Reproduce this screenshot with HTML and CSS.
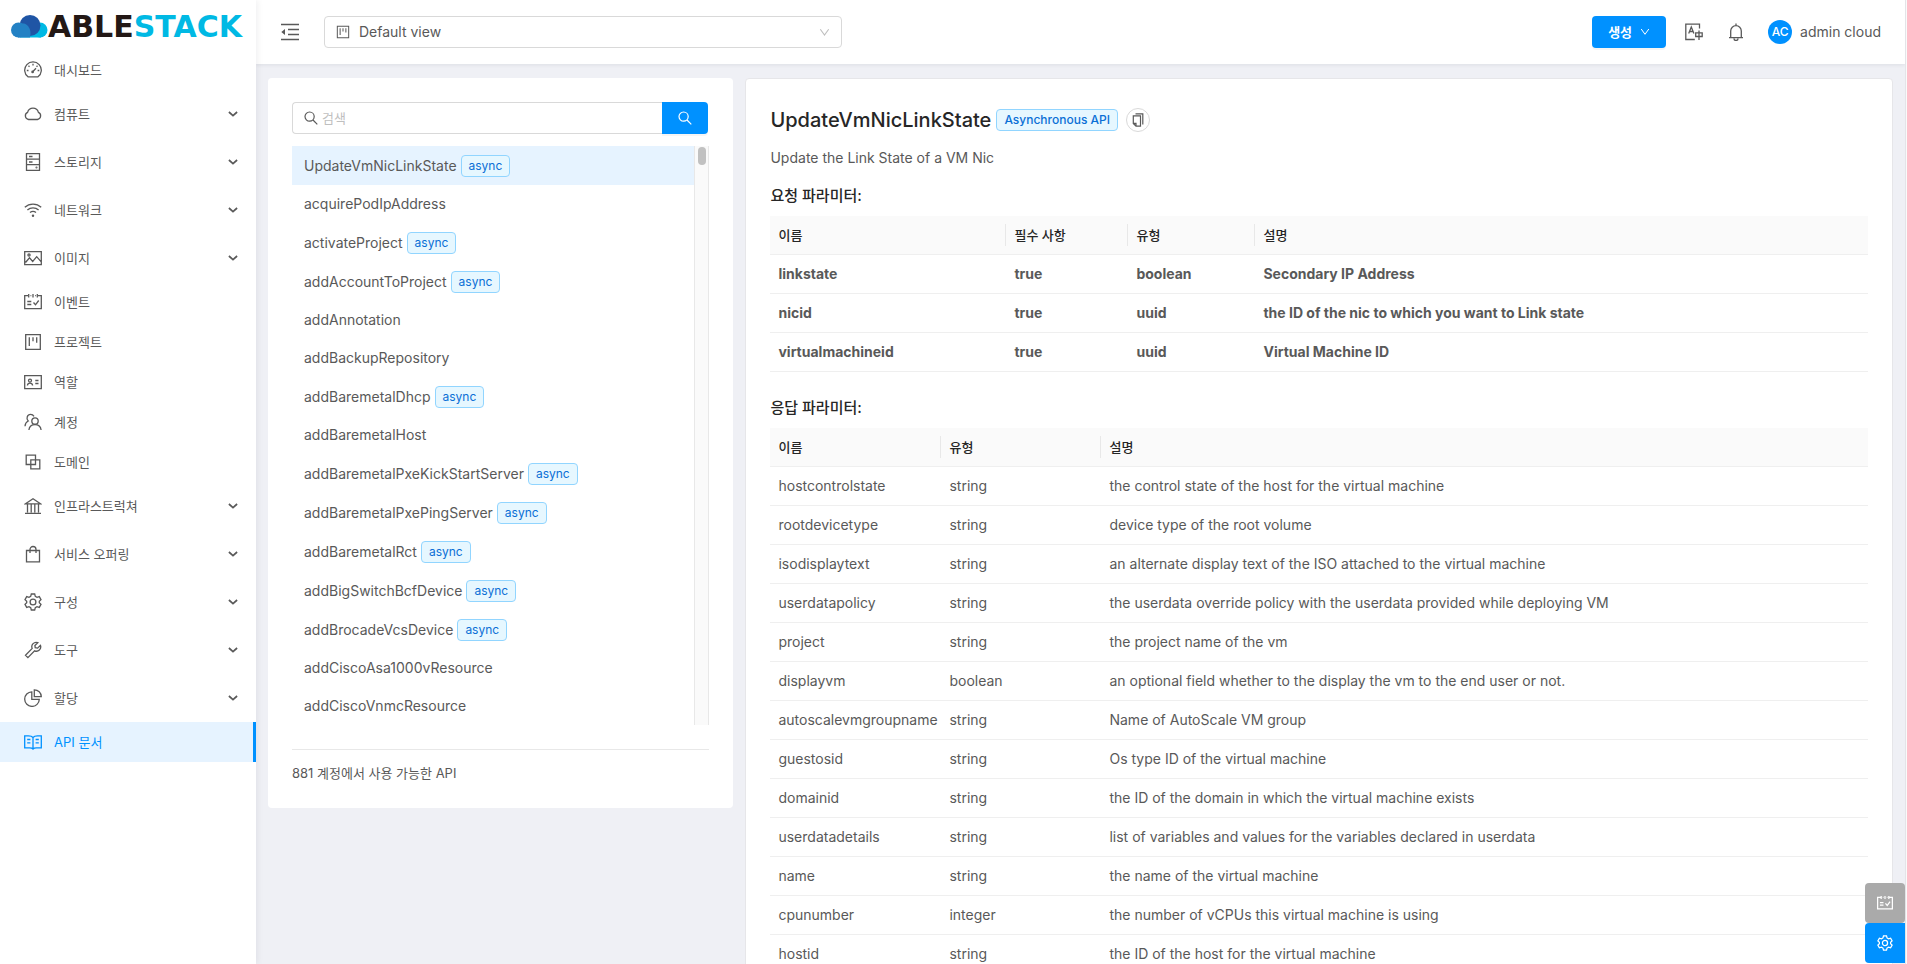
FILE: index.html
```html
<!DOCTYPE html>
<html lang="ko">
<head>
<meta charset="utf-8">
<title>ABLESTACK - API 문서</title>
<link rel="stylesheet" href="styles.css">
</head>
<body>
<svg class="sprite" aria-hidden="true">
  <symbol id="i-dash" viewBox="0 0 18 18"><path d="M4 15.800h10A8.300 8.300 0 1 0 4 15.800z"/><path d="M8.500 11l3.500-3.800M9 2.800v1.700M4.500 4.700l1 1M13.500 4.700l-1 1M2.800 9.500h1.700M13.600 9.500h1.700"/><circle cx="8.600" cy="10.900" r=".7"/></symbol>
  <symbol id="i-cloud" viewBox="0 0 18 18"><path d="M4.500 14.500A3.800 3.800 0 0 1 3.600 7.300 5.600 5.600 0 0 1 14.400 7.300 3.800 3.800 0 0 1 13.500 14.500z"/></symbol>
  <symbol id="i-disk" viewBox="0 0 18 18"><path d="M2.500.7h13v16.600h-13zM2.500 6.200h13M2.500 11.700h13M5 3.500h3.500M5 9h3.500"/><circle cx="12.500" cy="14.500" r=".4"/></symbol>
  <symbol id="i-wifi" viewBox="0 0 18 18"><path d="M.8 6.300a12 12 0 0 1 16.400 0M3.400 9a8.400 8.400 0 0 1 11.200 0M6 11.600a4.600 4.600 0 0 1 6 0"/><circle class="dot" cx="9" cy="14.700" r="1.200"/></symbol>
  <symbol id="i-image" viewBox="0 0 18 18"><path d="M.7 2.700h16.600v12.900H.7zM1.500 13.500l4-4.700 3.200 3.700 4-4.800 4.300 5"/><circle cx="5" cy="6" r="1.100"/></symbol>
  <symbol id="i-event" viewBox="0 0 18 18"><path d="M4 2.700H.7v12.900h16.600V2.700H14M4.700 1v3.500M9 1v3.500M13.300 1v3.500M6.500 2.700h.8M11 2.700h.8M3.300 8.500h4M3.300 11.500h4M9.500 9.500l2 2.300 3.200-4.300"/></symbol>
  <symbol id="i-project" viewBox="0 0 18 18"><path d="M1.700 1.700h14.600v14.600H1.700zM5.300 4.300v8.700M9 4.300v4M12.700 4.300v5.400"/></symbol>
  <symbol id="i-idcard" viewBox="0 0 18 18"><path d="M.7 2.700h16.600v12.900H.7zM3.400 12.500c.2-3.300 5-3.300 5.200 0M11.300 7.500h3.200M11.300 10.500h3.200"/><circle cx="6" cy="7.600" r="1.500"/></symbol>
  <symbol id="i-team" viewBox="0 0 18 18"><circle cx="11" cy="8" r="3.200"/><path d="M4.900 17c.8-7.200 11.400-7.200 12.200 0M1 13.300c.2-3 1.200-4.400 3.200-5.300C1.800 5.500 3.300 1.300 6.600 1.300c1.600 0 2.700.8 3.400 2"/></symbol>
  <symbol id="i-block" viewBox="0 0 18 18"><path d="M2.200 2.200h9.300v9.300H2.200zM6.800 6.800h9v9h-9z"/></symbol>
  <symbol id="i-bank" viewBox="0 0 18 18"><path d="M1.500 6.800L9 1.700l7.500 5.100zM3.500 7v8.500M7.200 7v8.500M10.800 7v8.500M14.500 7v8.500M1 16.300h16"/></symbol>
  <symbol id="i-bag" viewBox="0 0 18 18"><path d="M2.500 5.500h13v11.300h-13zM6 8V4.500a3 3 0 0 1 6 0V8"/></symbol>
  <symbol id="i-gear" viewBox="0 0 18 18"><path d="M7.300 1h3.400l.6 2.300 1.700 1 2.300-.7 1.700 3-1.700 1.600v1.600l1.700 1.600-1.700 3-2.300-.7-1.700 1-.6 2.300H7.300l-.6-2.300-1.700-1-2.300.7-1.700-3 1.700-1.600V8.200L1 6.600l1.700-3 2.300.7 1.700-1z"/><circle cx="9" cy="9" r="2.900"/></symbol>
  <symbol id="i-tool" viewBox="0 0 18 18"><path d="M13.800 1.700a4.300 4.300 0 0 0-5.600 5.700L1.500 14.200l2.400 2.400 6.700-6.800a4.300 4.300 0 0 0 5.800-5.500l-2.800 2.800-2.400-.4-.3-2.300z"/></symbol>
  <symbol id="i-pie" viewBox="0 0 18 18"><path d="M7.800 2.800a7.300 7.300 0 1 0 7.500 7.500H7.800zM10.300.8v6.900h7A7 7 0 0 0 10.300.8z"/></symbol>
  <symbol id="i-read" viewBox="0 0 18 18"><path d="M9 4.500C8 3.200 6.500 2.800 4.500 2.800H.7v12h5c1.600 0 2.500.3 3.300 1.200.8-.9 1.700-1.200 3.300-1.200h5v-12h-3.800C11.500 2.800 10 3.200 9 4.500zM9 4.500V16M3.200 6.500h3.200M3.200 9.800h3.200M11.600 6.500h3.200M11.600 9.800h3.200"/></symbol>
  <symbol id="i-fold" viewBox="0 0 18 18"><path d="M0 1.500h18M7 6.500h11M7 11.500h11M0 16.500h18"/><path class="dot" d="M.3 9l3.700-3v6z"/></symbol>
  <symbol id="i-search" viewBox="0 0 14 14"><circle cx="5.600" cy="5.600" r="4.600"/><path d="M9 9l4.300 4.300"/></symbol>
  <symbol id="i-down" viewBox="0 0 10 10"><path d="M1.200 2l3.800 5.300L8.800 2"/></symbol>
  <symbol id="i-chev" viewBox="0 0 10 10"><path d="M.9 3L5 6.600 9.100 3"/></symbol>
  <symbol id="i-lang" viewBox="0 0 18 18"><path d="M14.500 5.500V1.200H.8v15.300h9M3.700 10.500L6.300 4l2.600 6.500M4.600 8.500H8M10.700 9.800h6.500v3.700h-6.500zM14 7.500v9.500"/></symbol>
  <symbol id="i-bell" viewBox="0 0 18 18"><path d="M3.700 14.500V8a5.300 5.300 0 0 1 10.600 0v6.500M2 14.700h14M9 .6v2M7 15.500a2 2 0 0 0 4 0"/></symbol>
  <symbol id="i-copy" viewBox="0 0 14 14"><path d="M4.500.8h7.300v10.700M2.300 2.800h7.200v10.400H5L2.300 10.500zM2.500 10.300H5V13"/></symbol>
</svg>

<div class="app">
  <aside class="sidebar">
    <a class="logo" href="#" aria-label="ABLESTACK">
      <svg class="logo-mark" viewBox="0 0 37 23" aria-hidden="true">
        <circle cx="29" cy="15" r="7.500" fill="#00b9e4"/><rect x="9" y="15" width="21" height="7.500" fill="#00b9e4"/>
        <circle cx="19" cy="10.500" r="10.500" fill="#1f55a5"/>
        <circle cx="7.500" cy="15" r="7.500" fill="#2381c4"/><path d="M7 22.500V8.500h6c4 1 8 6 6 14z" fill="#2381c4"/>
      </svg>
      <span class="logo-text">ABLE<span class="logo-accent">STACK</span></span>
    </a>
    <nav class="menu">
      <a href="#" class="item"><svg class="icon"><use href="#i-dash"/></svg><span>대시보드</span></a>
      <a href="#" class="item sub"><svg class="icon"><use href="#i-cloud"/></svg><span>컴퓨트</span><svg class="chev"><use href="#i-chev"/></svg></a>
      <a href="#" class="item sub"><svg class="icon"><use href="#i-disk"/></svg><span>스토리지</span><svg class="chev"><use href="#i-chev"/></svg></a>
      <a href="#" class="item sub"><svg class="icon"><use href="#i-wifi"/></svg><span>네트워크</span><svg class="chev"><use href="#i-chev"/></svg></a>
      <a href="#" class="item sub"><svg class="icon"><use href="#i-image"/></svg><span>이미지</span><svg class="chev"><use href="#i-chev"/></svg></a>
      <a href="#" class="item"><svg class="icon"><use href="#i-event"/></svg><span>이벤트</span></a>
      <a href="#" class="item"><svg class="icon"><use href="#i-project"/></svg><span>프로젝트</span></a>
      <a href="#" class="item"><svg class="icon"><use href="#i-idcard"/></svg><span>역할</span></a>
      <a href="#" class="item"><svg class="icon"><use href="#i-team"/></svg><span>계정</span></a>
      <a href="#" class="item"><svg class="icon"><use href="#i-block"/></svg><span>도메인</span></a>
      <a href="#" class="item sub"><svg class="icon"><use href="#i-bank"/></svg><span>인프라스트럭쳐</span><svg class="chev"><use href="#i-chev"/></svg></a>
      <a href="#" class="item sub"><svg class="icon"><use href="#i-bag"/></svg><span>서비스 오퍼링</span><svg class="chev"><use href="#i-chev"/></svg></a>
      <a href="#" class="item sub"><svg class="icon"><use href="#i-gear"/></svg><span>구성</span><svg class="chev"><use href="#i-chev"/></svg></a>
      <a href="#" class="item sub"><svg class="icon"><use href="#i-tool"/></svg><span>도구</span><svg class="chev"><use href="#i-chev"/></svg></a>
      <a href="#" class="item sub"><svg class="icon"><use href="#i-pie"/></svg><span>할당</span><svg class="chev"><use href="#i-chev"/></svg></a>
      <a href="#" class="item active"><svg class="icon"><use href="#i-read"/></svg><span>API 문서</span></a>
    </nav>
  </aside>

  <div class="main">
    <header class="topbar">
      <button class="plain" aria-label="메뉴 접기"><svg class="icon"><use href="#i-fold"/></svg></button>
      <label class="view">
        <svg class="icon-s"><use href="#i-project"/></svg>
        <select aria-label="보기"><option>Default view</option></select>
        <svg class="arrow"><use href="#i-down"/></svg>
      </label>
      <div class="tools">
        <button class="create">생성<svg class="arrow-s"><use href="#i-down"/></svg></button>
        <button class="plain" aria-label="언어"><svg class="icon"><use href="#i-lang"/></svg></button>
        <button class="plain" aria-label="알림"><svg class="icon"><use href="#i-bell"/></svg></button>
        <button class="user"><span class="avatar">AC</span><span>admin cloud</span></button>
      </div>
    </header>

    <main class="content">
      <section class="card list-card">
        <form class="search">
          <label class="search-box"><svg class="icon-x"><use href="#i-search"/></svg><input type="text" placeholder="검색" aria-label="검색"></label>
          <button type="button" class="search-btn" aria-label="검색"><svg class="icon-x"><use href="#i-search"/></svg></button>
        </form>
        <div class="api-list">
          <div class="api-items">
            <a href="#" class="api tagged on">UpdateVmNicLinkState<span class="tag">async</span></a>
            <a href="#" class="api">acquirePodIpAddress</a>
            <a href="#" class="api tagged">activateProject<span class="tag">async</span></a>
            <a href="#" class="api tagged">addAccountToProject<span class="tag">async</span></a>
            <a href="#" class="api">addAnnotation</a>
            <a href="#" class="api">addBackupRepository</a>
            <a href="#" class="api tagged">addBaremetalDhcp<span class="tag">async</span></a>
            <a href="#" class="api">addBaremetalHost</a>
            <a href="#" class="api tagged">addBaremetalPxeKickStartServer<span class="tag">async</span></a>
            <a href="#" class="api tagged">addBaremetalPxePingServer<span class="tag">async</span></a>
            <a href="#" class="api tagged">addBaremetalRct<span class="tag">async</span></a>
            <a href="#" class="api tagged">addBigSwitchBcfDevice<span class="tag">async</span></a>
            <a href="#" class="api tagged">addBrocadeVcsDevice<span class="tag">async</span></a>
            <a href="#" class="api">addCiscoAsa1000vResource</a>
            <a href="#" class="api">addCiscoVnmcResource</a>
          </div>
          <div class="track"><div class="thumb"></div></div>
        </div>
        <p class="count">881 계정에서 사용 가능한 API</p>
      </section>

      <section class="card doc-card">
        <div class="doc-head">
          <h1>UpdateVmNicLinkState</h1>
          <span class="tag">Asynchronous API</span>
          <button class="copy" aria-label="복사"><svg class="icon-x"><use href="#i-copy"/></svg></button>
        </div>
        <p class="desc">Update the Link State of a VM Nic</p>
        <h2>요청 파라미터:</h2>
        <table class="req">
          <colgroup><col class="c-name"><col class="c-need"><col class="c-type"><col></colgroup>
          <thead><tr><th>이름</th><th>필수 사항</th><th>유형</th><th>설명</th></tr></thead>
          <tbody>
            <tr><td>linkstate</td><td>true</td><td>boolean</td><td>Secondary IP Address</td></tr>
            <tr><td>nicid</td><td>true</td><td>uuid</td><td>the ID of the nic to which you want to Link state</td></tr>
            <tr><td>virtualmachineid</td><td>true</td><td>uuid</td><td>Virtual Machine ID</td></tr>
          </tbody>
        </table>
        <h2>응답 파라미터:</h2>
        <table class="res">
          <colgroup><col class="c-name"><col class="c-type"><col></colgroup>
          <thead><tr><th>이름</th><th>유형</th><th>설명</th></tr></thead>
          <tbody>
            <tr><td>hostcontrolstate</td><td>string</td><td>the control state of the host for the virtual machine</td></tr>
            <tr><td>rootdevicetype</td><td>string</td><td>device type of the root volume</td></tr>
            <tr><td>isodisplaytext</td><td>string</td><td>an alternate display text of the ISO attached to the virtual machine</td></tr>
            <tr><td>userdatapolicy</td><td>string</td><td>the userdata override policy with the userdata provided while deploying VM</td></tr>
            <tr><td>project</td><td>string</td><td>the project name of the vm</td></tr>
            <tr><td>displayvm</td><td>boolean</td><td>an optional field whether to the display the vm to the end user or not.</td></tr>
            <tr><td>autoscalevmgroupname</td><td>string</td><td>Name of AutoScale VM group</td></tr>
            <tr><td>guestosid</td><td>string</td><td>Os type ID of the virtual machine</td></tr>
            <tr><td>domainid</td><td>string</td><td>the ID of the domain in which the virtual machine exists</td></tr>
            <tr><td>userdatadetails</td><td>string</td><td>list of variables and values for the variables declared in userdata</td></tr>
            <tr><td>name</td><td>string</td><td>the name of the virtual machine</td></tr>
            <tr><td>cpunumber</td><td>integer</td><td>the number of vCPUs this virtual machine is using</td></tr>
            <tr><td>hostid</td><td>string</td><td>the ID of the host for the virtual machine</td></tr>
          </tbody>
        </table>
      </section>
    </main>
  </div>

  <div class="floats">
    <button class="float grey" aria-label="이벤트"><svg class="icon-f"><use href="#i-event"/></svg></button>
    <button class="float blue" aria-label="설정"><svg class="icon-f"><use href="#i-gear"/></svg></button>
  </div>
</div>
</body>
</html>
```
FILE: styles.css
```css
* { box-sizing: border-box; }

body {
  margin: 0;
  background: #fafafa;
  color: #595959;
  font: 14px/22px Inter, "Noto Sans CJK KR", sans-serif;
}

a { color: inherit; text-decoration: none; }
button, input, select { font: inherit; color: inherit; }
button { padding: 0; border: 0; background: none; cursor: pointer; }
h1, h2, p { margin: 0; }

svg { flex: none; fill: none; stroke: currentColor; stroke-width: 1.3; }
.dot { fill: currentColor; stroke: none; }
.sprite { position: absolute; width: 0; height: 0; }
.icon { width: 18px; height: 18px; }
.icon-s { width: 14px; height: 14px; }
.icon-x { width: 14px; height: 14px; stroke-width: 1.2; }
.icon-f { width: 16px; height: 16px; stroke-width: 1.4; }

.app {
  display: flex;
  height: 100vh;
  margin-right: 1px;
  border-right: 1px solid #e4e4e8;
  background: #eff0f5;
  overflow: hidden;
}

.sidebar {
  flex: none;
  width: 256px;
  background: #fff;
  box-shadow: 2px 0 6px rgba(0, 21, 41, 0.06);
  z-index: 2;
}

.logo { display: flex; align-items: center; height: 50px; padding: 4px 0 0 11px; }
.logo-mark { width: 37px; height: 23px; margin-bottom: 2px; stroke: none; }
.logo-text { font: bold 30px/30px "DejaVu Sans", sans-serif; color: #231815; }
.logo-accent { color: #00b9e4; }

.menu { font-size: 13px; }
.item { display: flex; align-items: center; gap: 12px; height: 40px; padding: 0 18px 0 24px; }
.item.sub { margin: 4px 0; }
.item.sub + .item.sub { margin-top: 8px; }
.chev { width: 10px; height: 10px; margin-left: auto; stroke-width: 1.7; }
.item.active { background: #e6f3ff; color: #0091ff; border-right: 3px solid #0091ff; }

.main { flex: 1; min-width: 0; display: flex; flex-direction: column; }

.topbar {
  flex: none;
  display: flex;
  align-items: center;
  height: 64px;
  padding: 0 24px;
  background: #fff;
  box-shadow: 0 1px 4px rgba(0, 21, 41, 0.08);
  z-index: 1;
}
.plain { display: flex; padding: 1px; }
.view {
  display: flex;
  align-items: center;
  gap: 9px;
  width: 518px;
  height: 32px;
  margin-left: 24px;
  padding: 0 11px;
  border: 1px solid #d9d9d9;
  border-radius: 4px;
}
.view select { flex: 1; appearance: none; border: 0; padding: 0; background: none; outline: 0; }
.arrow { width: 11px; height: 11px; color: #bfbfbf; stroke-width: 1; }
.arrow-s { width: 10px; height: 10px; stroke-width: 1; }
.tools { display: flex; align-items: center; gap: 22px; margin-left: auto; }
.create {
  display: flex;
  align-items: center;
  gap: 8px;
  height: 32px;
  margin-right: -4px;
  padding: 0 16px;
  border-radius: 4px;
  background: #0091ff;
  color: #fff;
  font-size: 13px;
  font-weight: 700;
  box-shadow: 0 2px 0 rgba(0, 0, 0, 0.04);
}
.user { display: flex; align-items: center; gap: 8px; }
.avatar {
  width: 24px;
  border-radius: 50%;
  background: #0091ff;
  color: #fff;
  font-size: 12px;
  font-weight: 500;
  line-height: 24px;
}

.content {
  display: grid;
  grid-template-columns: repeat(24, minmax(0, 1fr));
  column-gap: 12px;
  align-items: start;
  flex: 1;
  min-height: 0;
  padding: 14px 12px 0;
}
.card { background: #fff; border-radius: 4px; }
.list-card { grid-column: span 7; padding: 24px; }
.doc-card { grid-column: span 17; padding: 24px; border: 1px solid #e6e6e9; }

.search { display: flex; height: 32px; margin-right: 1px; }
.search-box {
  flex: 1;
  display: flex;
  align-items: center;
  gap: 4px;
  min-width: 0;
  padding: 0 11px;
  border: 1px solid #d9d9d9;
  border-right: 0;
  border-radius: 4px 0 0 4px;
}
.search-box input { flex: 1; min-width: 0; border: 0; padding: 0; outline: 0; background: none; font-size: 13px; }
.search-box input::placeholder { color: #bfbfbf; }
.search-btn {
  display: flex;
  align-items: center;
  justify-content: center;
  width: 46px;
  border-radius: 0 4px 4px 0;
  background: #0091ff;
  color: #fff;
  box-shadow: 0 2px 0 rgba(0, 0, 0, 0.04);
}

.api-list { display: flex; margin-top: 12px; }
.api-items { flex: 1; min-width: 0; }
.api { display: flex; align-items: center; gap: 4px; height: 38px; padding: 0 12px; }
.api.tagged { height: 39px; }
.api.on { background: #e6f3ff; }
.track { width: 15px; padding: 1px 3px; border: 1px solid #e8e8e8; border-width: 0 1px; background: #fafafa; }
.thumb { height: 18px; width: 8px; border-radius: 4px; background: #c1c1c1; }
.tag {
  padding: 0 7px;
  border: 1px solid #91d5ff;
  border-radius: 4px;
  background: #e6f7ff;
  color: #0b6fd6;
  font-size: 12px;
  line-height: 20px;
}
.count { margin-top: 24px; padding-top: 12px; border-top: 1px solid #e8e8e8; font-size: 13px; }

.doc-head { display: flex; align-items: center; gap: 5px; height: 34px; color: #262626; }
.doc-head h1 { font-size: 20px; font-weight: 500; line-height: 28px; }
.doc-head .tag { font-weight: 500; }
.copy {
  display: flex;
  align-items: center;
  justify-content: center;
  width: 24px;
  height: 24px;
  margin-left: 3px;
  border: 1px solid #d9d9d9;
  border-radius: 50%;
  color: #595959;
}
.desc { margin-top: 10px; }
h2 { margin: 15px 0 8px; color: #262626; font-size: 15px; font-weight: 500; line-height: 24px; }

table { width: 100%; border-collapse: separate; border-spacing: 0; table-layout: fixed; }
.req { margin-bottom: 24px; }
th, td { height: 39px; padding: 8px; border-bottom: 1px solid #efefef; text-align: left; }
th { position: relative; background: #fafafa; color: #262626; font-size: 13px; font-weight: 500; }
th:not(:last-child)::after {
  content: "";
  position: absolute;
  top: 8px;
  right: 0;
  bottom: 8px;
  width: 1px;
  background: #e8e8e8;
}
.req td { font-weight: 700; }
.req .c-name { width: 236px; }
.req .c-need { width: 122px; }
.req .c-type { width: 127px; }
.res .c-name { width: 171px; }
.res .c-type { width: 160px; }

.floats { position: fixed; right: 2px; bottom: 1px; z-index: 3; }
.float { display: flex; align-items: center; justify-content: center; width: 40px; height: 40px; border-radius: 4px 0 0 4px; color: #fff; }
.grey { background: #aaa; border-radius: 4px; }
.blue { background: #0091ff; }
```
